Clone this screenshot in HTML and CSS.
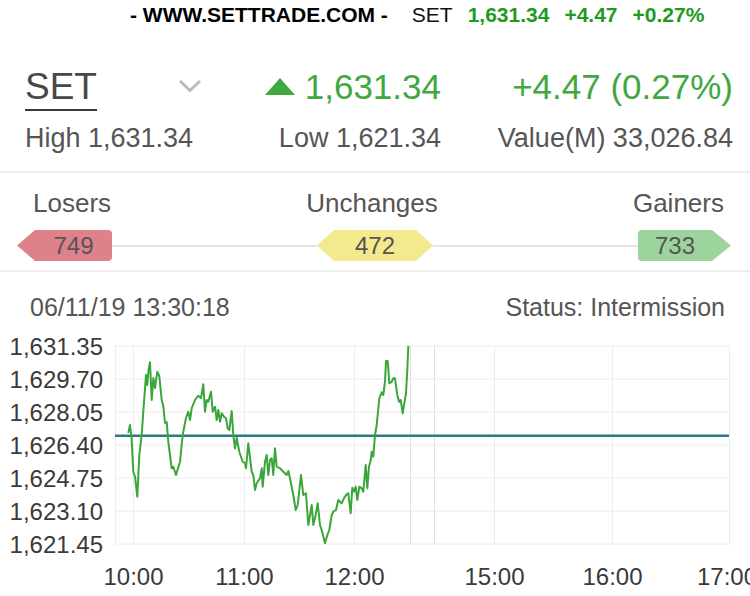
FILE: index.html
```html
<!DOCTYPE html>
<html lang="en">
<head>
<meta charset="utf-8">
<title>SET Index</title>
<link rel="stylesheet" href="styles.css">
</head>
<body>
<div class="ticker">
  <span class="brand">- WWW.SETTRADE.COM -</span>
  <span class="t-sym">SET</span>
  <span class="t-up">1,631.34</span>
  <span class="t-up">+4.47</span>
  <span class="t-up">+0.27%</span>
</div>

<section class="summary">
  <div class="sym-cell">
    <span class="sym">SET</span>
    <svg class="chev" width="24" height="14" viewBox="0 0 24 14"><polyline points="2,2 12,11.5 22,2" fill="none" stroke="#bcbcbc" stroke-width="3"/></svg>
  </div>
  <div class="last">
    <svg class="tri" width="30" height="17" viewBox="0 0 30 17"><polygon points="15,0 30,17 0,17" fill="#3fa83f"/></svg>
    <span>1,631.34</span>
  </div>
  <div class="chg">+4.47 (0.27%)</div>
  <div class="stat">High 1,631.34</div>
  <div class="stat end">Low 1,621.34</div>
  <div class="stat end">Value(M) 33,026.84</div>
</section>

<section class="breadth">
  <div class="breadth-labels">
    <span>Losers</span>
    <span>Unchanges</span>
    <span>Gainers</span>
  </div>
  <div class="breadth-bar">
    <div class="badge lose">749</div>
    <div class="rail"></div>
    <div class="badge same">472</div>
    <div class="rail"></div>
    <div class="badge gain">733</div>
  </div>
</section>

<section class="intraday">
  <div class="meta">
    <span>06/11/19 13:30:18</span>
    <span>Status: Intermission</span>
  </div>
  <svg class="chart" width="750" height="274" viewBox="0 322 750 274">
    <g class="grid">
      <line x1="115" y1="346" x2="729" y2="346"/>
      <line x1="115" y1="379" x2="729" y2="379"/>
      <line x1="115" y1="412" x2="729" y2="412"/>
      <line x1="115" y1="445" x2="729" y2="445"/>
      <line x1="115" y1="478" x2="729" y2="478"/>
      <line x1="115" y1="511" x2="729" y2="511"/>
      <line x1="115" y1="544" x2="729" y2="544"/>
      <line x1="115.5" y1="346" x2="115.5" y2="544"/>
      <line x1="133.5" y1="346" x2="133.5" y2="544"/>
      <line x1="244.5" y1="346" x2="244.5" y2="544"/>
      <line x1="354.5" y1="346" x2="354.5" y2="544"/>
      <line class="brk" x1="410.5" y1="346" x2="410.5" y2="544"/>
      <line class="brk" x1="434.5" y1="346" x2="434.5" y2="544"/>
      <line x1="494.5" y1="346" x2="494.5" y2="544"/>
      <line x1="612.5" y1="346" x2="612.5" y2="544"/>
      <line x1="729.5" y1="346" x2="729.5" y2="544"/>
    </g>
    <line class="prior" x1="115" y1="435.7" x2="729" y2="435.7"/>
    <polyline class="price" points="128.3,433 130,425 131.5,437 133.3,471.7 135,476.7 137.3,496.7 139.3,455 141.7,435 143.3,411.7 146,375 147.3,385 148.5,370 150,362.3 151.7,400 153.3,378 155,388 157.3,371.7 159.3,376 161.7,400 163.3,406 165,423 166.7,422 168.3,441.7 170,455 171.7,468.3 173.3,466.7 176,475 180,461.7 182.7,435 186,418 188.3,411.7 190,420 191.7,408.3 195,400 198.3,395.7 201,398 203.3,384.3 205,411.7 206.7,400 208.3,401.7 211,391.7 212.7,411.7 215,406.7 216.7,420 218.3,410 220,421.7 221.7,413.3 224,416.7 226,418.3 227.7,428.3 229.3,430 231.7,411 233.3,435 235,448.3 236.7,438 239.3,451.7 242.7,461.7 245,463.3 246,468.3 248.3,443.3 251.7,471.7 253.3,475 255,490 256.7,483.3 260,478.3 261.7,468.3 262.7,486.7 265,461.7 266.7,455 268.3,475 270,460 271.7,458.3 273.3,475 275,448.3 276.7,466.7 280,468.3 283.3,471.7 286.7,475 288.3,471 290,478.3 293.3,495 295.7,510 297.7,505 301,475 303.3,495 306,493.3 308.3,525 311.7,505 313.3,525 315,518.3 317.7,503.3 320,525 321.7,530 325,543.3 327.3,535 329.3,530 331.7,515 333.3,511.7 336,510 338.3,500 340,501.7 341.7,503.3 344.3,497.7 346.7,494.3 348.3,493.3 350.7,513.3 352.3,487.7 354,491.7 355.7,486.7 357.3,500 359.3,486.7 361.7,488.3 363.3,491.7 365.7,465 367.3,488.3 369,466.7 370.7,460 371.7,451.7 373.3,456.7 375,435 376.7,425 379.3,398.3 381.7,392.3 383.3,395 385,381.7 386,361 387.7,361 389.3,383.3 391.7,381.7 393.3,378.3 395,378.3 397.3,395 399,401.7 400.7,400 402.7,413.3 404,405 406,393.3 407.3,370 408.3,346"/>
    <g class="ylab">
      <text x="103" y="354.5">1,631.35</text>
      <text x="103" y="387.5">1,629.70</text>
      <text x="103" y="420.5">1,628.05</text>
      <text x="103" y="453.5">1,626.40</text>
      <text x="103" y="486.5">1,624.75</text>
      <text x="103" y="519.5">1,623.10</text>
      <text x="103" y="552.5">1,621.45</text>
    </g>
    <g class="xlab">
      <text x="133.5" y="585">10:00</text>
      <text x="244.5" y="585">11:00</text>
      <text x="354.5" y="585">12:00</text>
      <text x="494.5" y="585">15:00</text>
      <text x="612.5" y="585">16:00</text>
      <text x="727" y="585">17:00</text>
    </g>
  </svg>
</section>
</body>
</html>
```

FILE: styles.css
```css
html, body {
  margin: 0;
  padding: 0;
  background: #fff;
}
body {
  width: 750px;
  height: 596px;
  overflow: hidden;
  font-family: "Liberation Sans", Arial, sans-serif;
  color: #555;
}

/* ticker strip */
.ticker {
  display: flex;
  align-items: center;
  height: 30px;
  padding-left: 130px;
  font-size: 21px;
  gap: 15px;
  white-space: nowrap;
}
.brand {
  font-weight: bold;
  color: #000;
  margin-right: 9px;
}
.t-sym {
  color: #111;
}
.t-up {
  font-weight: bold;
  color: #1f9b1f;
}

/* summary */
.summary {
  display: grid;
  grid-template-columns: 250px 166px 1fr;
  row-gap: 11px;
  align-items: start;
  margin-top: 35px;
  padding: 0 17px 17px 25px;
  border-bottom: 2px solid #ededed;
}
.sym-cell {
  display: flex;
  align-items: center;
}
.sym {
  display: inline-block;
  font-size: 37px;
  line-height: 44px;
  color: #474747;
  border-bottom: 2px solid #3a3a3a;
}
.chev {
  margin-left: 81px;
  margin-bottom: 5px;
}
.last {
  justify-self: end;
  display: flex;
  align-items: center;
  gap: 10px;
  height: 44px;
  font-size: 35px;
  line-height: 44px;
  color: #3fa83f;
}
.tri {
  margin-bottom: 1px;
}
.chg {
  justify-self: end;
  font-size: 35px;
  line-height: 44px;
  color: #3fa83f;
}
.stat {
  font-size: 27px;
  line-height: 32px;
  color: #555;
}
.stat.end {
  justify-self: end;
}

/* breadth */
.breadth {
  padding: 14px 0 9px;
  border-bottom: 2px solid #ededed;
}
.breadth-labels {
  display: flex;
  justify-content: space-between;
  padding: 0 26px 0 33px;
  font-size: 26px;
  line-height: 32px;
  color: #555;
}
.breadth-bar {
  display: flex;
  align-items: center;
  margin-top: 11px;
  padding: 0 19px 0 17px;
  height: 31px;
}
.rail {
  flex: 1;
  height: 2px;
  background: #e6e6e6;
}
.badge {
  height: 31px;
  line-height: 31px;
  font-size: 24px;
  color: #555;
  text-align: center;
  box-sizing: border-box;
}
.badge.lose {
  width: 95px;
  padding-left: 18px;
  background: #dd818a;
  border-radius: 0 4px 4px 0;
  clip-path: polygon(0 50%, 18px 0, 100% 0, 100% 100%, 18px 100%);
}
.badge.same {
  width: 116px;
  background: #f3e98d;
  clip-path: polygon(0 50%, 17px 0, calc(100% - 17px) 0, 100% 50%, calc(100% - 17px) 100%, 17px 100%);
}
.badge.gain {
  width: 93px;
  padding-right: 19px;
  background: #9dd49e;
  border-radius: 4px 0 0 4px;
  clip-path: polygon(0 0, calc(100% - 19px) 0, 100% 50%, calc(100% - 19px) 100%, 0 100%);
}

/* intraday chart */
.meta {
  display: flex;
  justify-content: space-between;
  padding: 20px 25px 0 30px;
  font-size: 25px;
  line-height: 30px;
  color: #555;
}
.chart {
  display: block;
}
.grid line {
  stroke: #ececec;
  stroke-width: 1;
}
.grid line.brk {
  stroke: #e0e0e0;
}
.prior {
  stroke: #2b7a8b;
  stroke-width: 2.5;
}
.price {
  fill: none;
  stroke: #3aa63a;
  stroke-width: 2;
  stroke-linejoin: round;
}
.ylab text {
  font-family: "Liberation Sans", Arial, sans-serif;
  font-size: 24px;
  fill: #3a3a3a;
  text-anchor: end;
}
.xlab text {
  font-family: "Liberation Sans", Arial, sans-serif;
  font-size: 24px;
  fill: #3a3a3a;
  text-anchor: middle;
}
```
